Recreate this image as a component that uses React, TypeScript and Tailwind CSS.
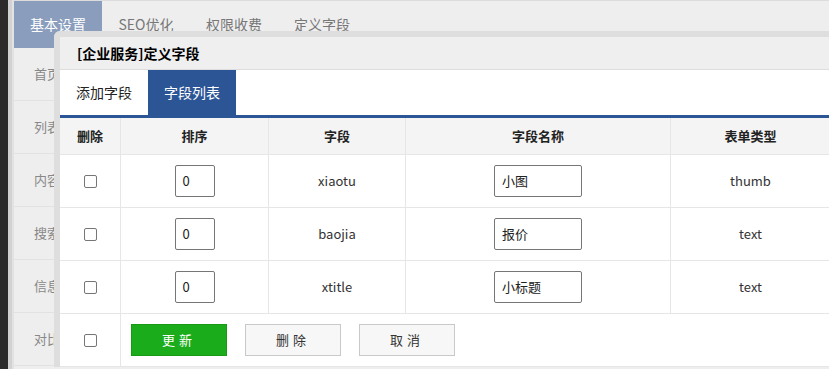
const menu = ["首页", "列表", "内容", "搜索", "信息", "对比"];

const rows = [
  { sort: "0", field: "xiaotu", name: "小图", type: "thumb" },
  { sort: "0", field: "baojia", name: "报价", type: "text" },
  { sort: "0", field: "xtitle", name: "小标题", type: "text" },
];

function Check() {
  return <div className="mx-auto h-[13px] w-[13px] rounded-[2px] border border-[#767676] bg-white" />;
}

export default function App() {
  return (
    <div className="relative flex h-[369px] w-[829px] overflow-hidden bg-[#eeeeee] font-['Microsoft_YaHei','Noto_Sans_CJK_SC',sans-serif]">
      <div className="w-[8px] shrink-0 bg-[#2b2b2b]" />
      <div className="w-[4px] shrink-0 bg-[#d2d2d2]" />
      <div className="w-[2px] shrink-0 bg-[#e2e2e2]" />

      <div className="flex flex-1 flex-col border-t border-[#dcdcdc]">
        <div className="flex h-[47px] items-center text-[14px] text-[#777]">
          <div className="flex h-full w-[88px] items-center justify-center bg-[#8a9dbc] text-white">基本设置</div>
          <div className="w-[88px] text-center">SEO优化</div>
          <div className="w-[88px] text-center">权限收费</div>
          <div className="w-[88px] text-center">定义字段</div>
        </div>
        <div className="w-[100px] border-r border-[#e2e2e2]">
          {menu.map((m) => (
            <div key={m} className="flex h-[53px] items-center border-b border-[#e2e2e2] pl-[20px] text-[13px] text-[#888]">
              {m}
            </div>
          ))}
        </div>
      </div>

      <div className="absolute left-[54px] top-[31px] w-[790px] rounded-tl-[6px] border-[6px] border-r-0 border-b-0 border-[#dedede] bg-white">
        <div className="flex h-[33px] items-center border-b border-[#dddddd] bg-[#efefef] pl-[17px] text-[14px] font-bold text-black">
          [企业服务]定义字段
        </div>
        <div className="flex h-[48px] border-b-[3px] border-[#2c5596] text-[14px]">
          <div className="flex w-[88px] items-center justify-center text-[#222]">添加字段</div>
          <div className="flex w-[88px] items-center justify-center bg-[#2c5596] text-white">字段列表</div>
        </div>

        <div className="text-[13px] text-[#333]">
          <div className="grid h-[37px] grid-cols-[60px_148px_137px_265px_160px] items-center border-b border-[#e6e6e6] bg-[#f4f4f4] font-bold text-[#222]">
            <div className="text-center">删除</div>
            <div className="flex h-full items-center justify-center border-l border-[#e6e6e6]">排序</div>
            <div className="flex h-full items-center justify-center border-l border-[#e6e6e6]">字段</div>
            <div className="flex h-full items-center justify-center border-l border-[#e6e6e6]">字段名称</div>
            <div className="flex h-full items-center justify-center border-l border-[#e6e6e6]">表单类型</div>
          </div>

          {rows.map((r) => (
            <div key={r.field} className="grid h-[53px] grid-cols-[60px_148px_137px_265px_160px] border-b border-[#e6e6e6]">
              <div className="flex items-center">
                <Check />
              </div>
              <div className="flex items-center justify-center border-l border-[#e6e6e6]">
                <div className="flex h-[32px] w-[40px] items-center rounded-[2px] border border-[#767676] pl-[7px] text-[#222]">{r.sort}</div>
              </div>
              <div className="flex items-center justify-center border-l border-[#e6e6e6]">{r.field}</div>
              <div className="flex items-center justify-center border-l border-[#e6e6e6]">
                <div className="flex h-[32px] w-[88px] items-center rounded-[2px] border border-[#767676] pl-[7px] text-[#222]">{r.name}</div>
              </div>
              <div className="flex items-center justify-center border-l border-[#e6e6e6]">{r.type}</div>
            </div>
          ))}

          <div className="grid h-[53px] grid-cols-[60px_710px] border-b border-[#e6e6e6]">
            <div className="flex items-center">
              <Check />
            </div>
            <div className="flex items-center gap-[18px] border-l border-[#e6e6e6] pl-[10px]">
              <button className="h-[32px] w-[96px] border border-[#179b16] bg-[#1aac1a] tracking-[4px] text-white">更新</button>
              <button className="h-[32px] w-[96px] border border-[#c9c9c9] bg-[#f7f7f7] tracking-[4px] text-[#333]">删除</button>
              <button className="h-[32px] w-[96px] border border-[#c9c9c9] bg-[#f7f7f7] tracking-[4px] text-[#333]">取消</button>
            </div>
          </div>
        </div>
      </div>
    </div>
  );
}
